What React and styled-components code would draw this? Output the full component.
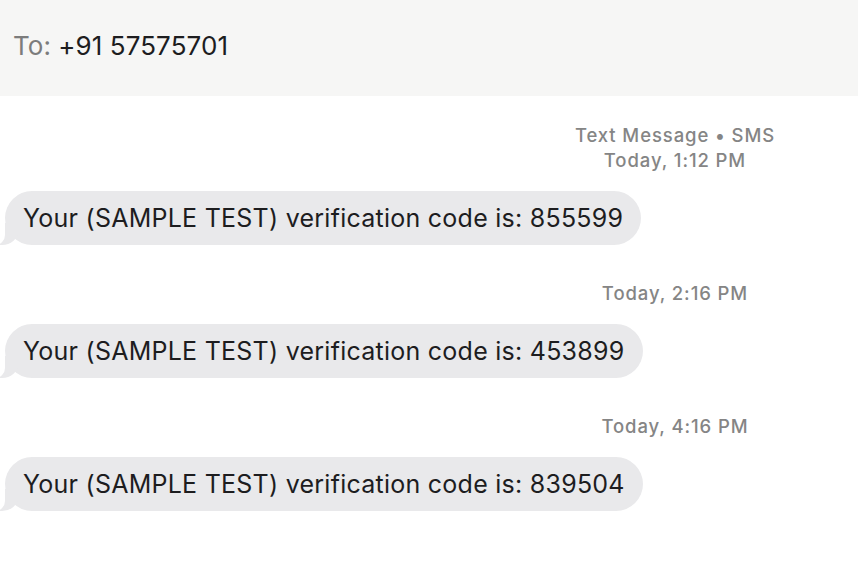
import React from "react";
import styled, { createGlobalStyle } from "styled-components";

const Global = createGlobalStyle`
  html, body { margin: 0; padding: 0; background: #ffffff; }
  body { font-family: "Inter", "Liberation Sans", sans-serif; -webkit-font-smoothing: antialiased; }
`;

const Page = styled.div`
  width: 858px;
  height: 568px;
  overflow: hidden;
  background: #ffffff;
`;

const Header = styled.div`
  height: 96px;
  background: #f6f6f5;
  display: flex;
  align-items: center;
  padding: 0 0 6px 13px;
  box-sizing: border-box;
  gap: 7px;
  font-size: 26px;
  letter-spacing: 0.1px;
`;

const ToLabel = styled.span`
  color: #7c7c7c;
`;

const Recipient = styled.span`
  color: #1d1d1f;
`;

const Thread = styled.div`
  display: flex;
  flex-direction: column;
  padding-top: 27px;
`;

const Stamp = styled.div`
  width: 300px;
  margin-left: 525px;
  text-align: center;
  font-size: 18.5px;
  letter-spacing: 0.9px;
  line-height: 25px;
  color: #858585;
  margin-top: ${(p) => p.$gap || 0}px;
  margin-bottom: 18px;
  font-weight: 500;
`;

const Bubble = styled.div`
  position: relative;
  align-self: flex-start;
  margin-left: 5px;
  height: 54px;
  display: flex;
  align-items: center;
  padding: 0 18px;
  background: #e9e9eb;
  border-radius: 27px;
  color: #1d1d1f;
  font-size: 25px;
  letter-spacing: 0.25px;
  &::before {
    content: "";
    position: absolute;
    left: -7px;
    bottom: 0;
    width: 20px;
    height: 22px;
    background: #e9e9eb;
    border-bottom-right-radius: 16px 14px;
  }
  &::after {
    content: "";
    position: absolute;
    left: -12px;
    bottom: 0;
    width: 12px;
    height: 24px;
    background: #ffffff;
    border-bottom-right-radius: 10px;
  }
`;

const BubbleText = styled.span`
  position: relative;
  z-index: 1;
`;

const messages = [
  { stamp: ["Text Message • SMS", "Today, 1:12 PM"], code: "855599", gap: 0 },
  { stamp: ["Today, 2:16 PM"], code: "453899", gap: 36 },
  { stamp: ["Today, 4:16 PM"], code: "839504", gap: 36 },
];

export default function App() {
  return (
    <Page>
      <Global />
      <Header>
        <ToLabel>To:</ToLabel>
        <Recipient>+91 57575701</Recipient>
      </Header>
      <Thread>
        {messages.map((m, i) => (
          <React.Fragment key={i}>
            <Stamp $gap={m.gap}>
              {m.stamp.map((s, j) => (
                <div key={j}>{s}</div>
              ))}
            </Stamp>
            <Bubble>
              <BubbleText>Your (SAMPLE TEST) verification code is: {m.code}</BubbleText>
            </Bubble>
          </React.Fragment>
        ))}
      </Thread>
    </Page>
  );
}
